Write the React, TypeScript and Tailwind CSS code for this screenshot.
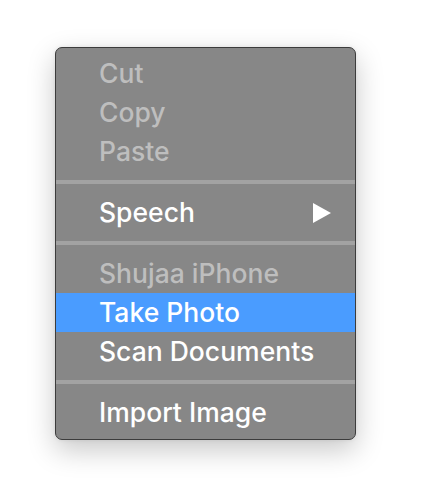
import React from "react";

type Item =
  | { kind: "sep" }
  | { kind: "item"; label: string; disabled?: boolean; active?: boolean; submenu?: boolean };

const items: Item[] = [
  { kind: "item", label: "Cut", disabled: true },
  { kind: "item", label: "Copy", disabled: true },
  { kind: "item", label: "Paste", disabled: true },
  { kind: "sep" },
  { kind: "item", label: "Speech", submenu: true },
  { kind: "sep" },
  { kind: "item", label: "Shujaa iPhone", disabled: true },
  { kind: "item", label: "Take Photo", active: true },
  { kind: "item", label: "Scan Documents" },
  { kind: "sep" },
  { kind: "item", label: "Import Image" },
];

export default function App() {
  return (
    <div className="w-[448px] h-[504px] bg-white pt-[47px] pl-[55px]" style={{ fontFamily: "Inter, 'Liberation Sans', sans-serif" }}>
      <div className="w-[301px] rounded-[7px] border border-[#3c3c3c] bg-[#878787] pt-[6px] pb-[7px] shadow-[0_10px_28px_rgba(0,0,0,0.22),0_0_4px_rgba(0,0,0,0.08)] overflow-hidden">
        {items.map((it, i) =>
          it.kind === "sep" ? (
            <div key={i} className="h-[22px] flex items-center">
              <div className="h-[4px] w-full bg-[#a2a2a2]" />
            </div>
          ) : (
            <div
              key={i}
              className={`h-[39px] flex items-center justify-between pl-[43px] pr-[24px] text-[26.5px] leading-none font-medium ${
                it.active ? "bg-[#4a9cff] text-white" : it.disabled ? "text-[#bebebe]" : "text-white"
              }`}
            >
              <span>{it.label}</span>
              {it.submenu && (
                <svg width="18" height="20" viewBox="0 0 18 20">
                  <polygon points="0,0 18,10 0,20" fill="white" />
                </svg>
              )}
            </div>
          )
        )}
      </div>
    </div>
  );
}
